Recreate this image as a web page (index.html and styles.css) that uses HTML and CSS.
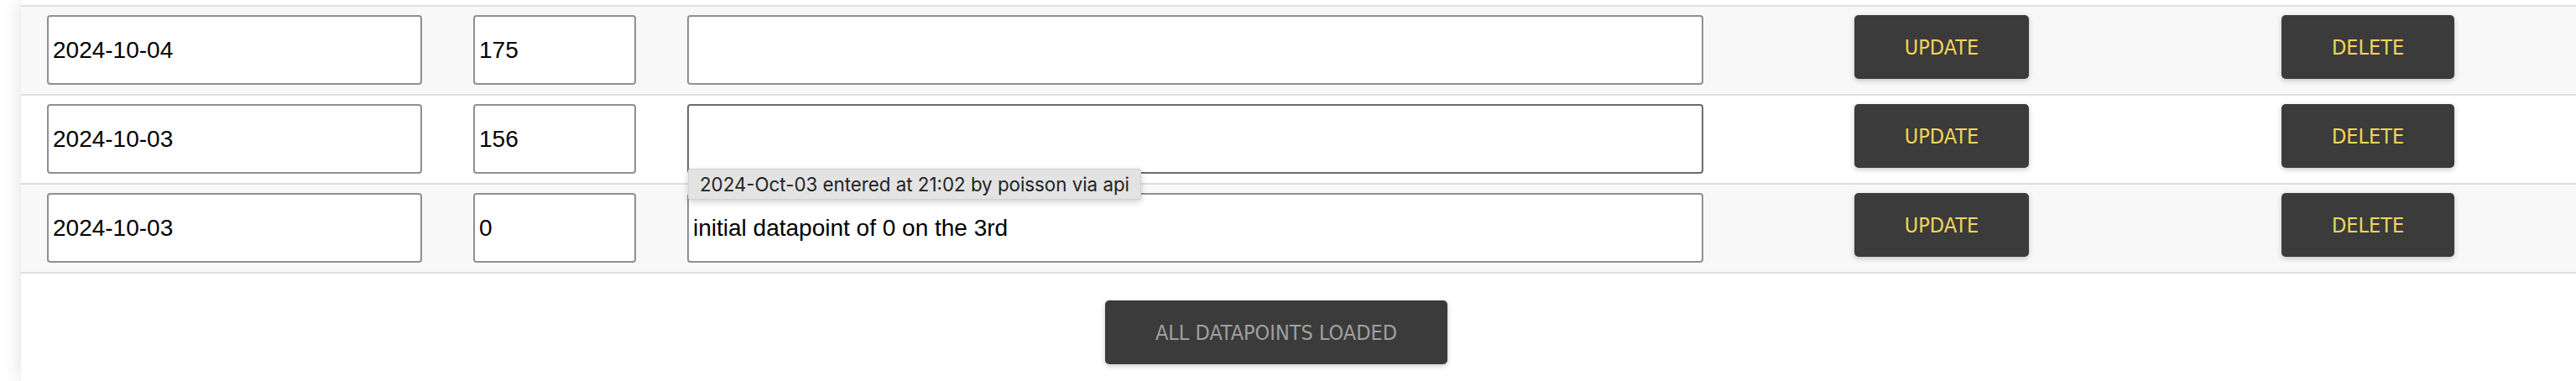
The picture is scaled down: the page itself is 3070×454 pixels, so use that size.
FILE: index.html
```html
<!DOCTYPE html>
<html lang="en">
<head>
<meta charset="utf-8">
<title>Datapoints</title>
<link rel="stylesheet" href="styles.css">
</head>
<body>
<div class="page">
  <div class="sheet">
    <div class="rows">
      <div class="row shaded">
        <div class="cell"><input class="field" type="text" value="2024-10-04"></div>
        <div class="cell"><input class="field" type="text" value="175"></div>
        <div class="cell"><input class="field" type="text" value=""></div>
        <div class="cell btncell"><button class="btn">UPDATE</button></div>
        <div class="cell btncell"><button class="btn">DELETE</button></div>
      </div>
      <div class="row">
        <div class="cell"><input class="field" type="text" value="2024-10-03"></div>
        <div class="cell"><input class="field" type="text" value="156"></div>
        <div class="cell"><input class="field hovered" type="text" value=""></div>
        <div class="cell btncell"><button class="btn">UPDATE</button></div>
        <div class="cell btncell"><button class="btn">DELETE</button></div>
      </div>
      <div class="row shaded last">
        <div class="cell"><input class="field" type="text" value="2024-10-03"></div>
        <div class="cell"><input class="field" type="text" value="0"></div>
        <div class="cell"><input class="field" type="text" value="initial datapoint of 0 on the 3rd"></div>
        <div class="cell btncell"><button class="btn">UPDATE</button></div>
        <div class="cell btncell"><button class="btn">DELETE</button></div>
      </div>
    </div>
    <div class="footer">
      <button class="btn loaded">ALL DATAPOINTS LOADED</button>
    </div>
    <div class="tooltip">2024-Oct-03 entered at 21:02 by poisson via api</div>
  </div>
</div>
</body>
</html>
```

FILE: styles.css
```css
html, body {
  margin: 0;
  padding: 0;
  overflow: hidden;
  background: #ffffff;
}

.page {
  width: 3070px;
  height: 454px;
  overflow: hidden;
  padding-left: 25px;
  box-sizing: border-box;
}

.sheet {
  position: relative;
  width: 3051px;
  min-height: 454px;
  background: #ffffff;
  box-shadow: 0 0 22px rgba(0, 0, 0, 0.13);
  padding-top: 6px;
  box-sizing: border-box;
}

.rows {
  display: flex;
  flex-direction: column;
}

.row {
  display: grid;
  grid-template-columns: 508px 255px 1272px 508px 508px;
  border-top: 2px solid #dedede;
  background: #ffffff;
  padding: 10px 0 11px;
}

.row.shaded {
  background: #f8f8f8;
}

.row.last {
  border-bottom: 2px solid #dedede;
}

.cell {
  padding: 0 30px 0 31px;
  display: flex;
  align-items: flex-start;
}

.btncell {
  padding: 0;
  justify-content: center;
}

.field {
  width: 100%;
  height: 83px;
  box-sizing: border-box;
  margin: 0;
  border: 2px solid #8f8e9a;
  border-radius: 4px;
  background: #ffffff;
  padding: 0 5px;
  font-family: "Liberation Sans", Arial, sans-serif;
  font-size: 28px;
  color: #000000;
  outline: none;
}

.field.hovered {
  border-color: #6b6a74;
}

.btn {
  height: 76px;
  margin: 0;
  padding: 0 60px;
  border: none;
  border-radius: 5px;
  background: #3b3b3b;
  color: #f6d55b;
  font-family: "DejaVu Sans Condensed", "DejaVu Sans", sans-serif;
  font-stretch: condensed;
  font-size: 25px;
  box-shadow: 0 2px 6px rgba(0, 0, 0, 0.22);
  cursor: pointer;
}

.footer {
  display: flex;
  justify-content: center;
  padding: 32px 59px 0 0;
}

.btn.loaded {
  color: #a0a0a0;
}

.tooltip {
  position: absolute;
  left: 795px;
  top: 201px;
  height: 37px;
  box-sizing: border-box;
  padding: 0 13px;
  display: flex;
  align-items: center;
  background: #e2e3e2;
  border: 1px solid #d0d0d0;
  border-radius: 2px;
  box-shadow: 0 3px 8px rgba(0, 0, 0, 0.18);
  font-family: Inter, "Liberation Sans", sans-serif;
  font-size: 22.3px;
  color: #222222;
  white-space: nowrap;
}
```
